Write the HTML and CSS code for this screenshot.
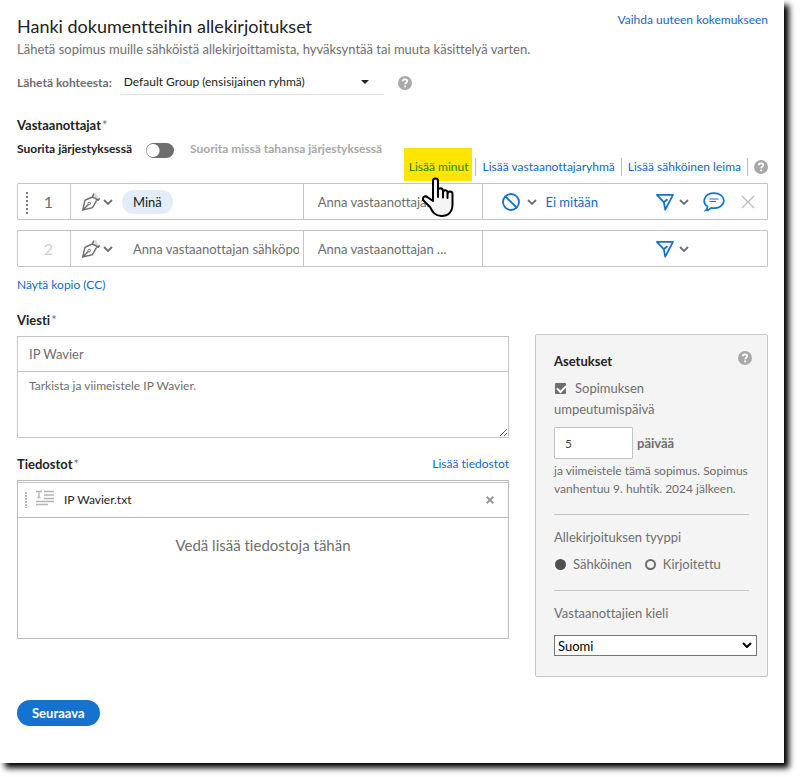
FILE: index.html
```html
<!DOCTYPE html>
<html lang="fi">
<head>
<meta charset="utf-8">
<title>Hanki dokumentteihin allekirjoitukset</title>
<link rel="stylesheet" href="styles.css">
</head>
<body>
<svg class="defs" aria-hidden="true">
  <symbol id="help" viewBox="0 0 14 14"><circle cx="7" cy="7" r="7" fill="#a9a9a9"/><path d="M4.7 5.2C4.7 2.6 9.3 2.7 9.3 5.1C9.3 6.7 7.1 6.7 7.1 8.3" fill="none" stroke="#fff" stroke-width="1.7"/><rect x="6.2" y="9.5" width="1.8" height="1.8" fill="#fff"/></symbol>
  <symbol id="chevron" viewBox="0 0 10 6"><path d="M1 1l4 4 4-4" fill="none" stroke="currentColor" stroke-width="1.8"/></symbol>
  <symbol id="pen" viewBox="0 0 20 20"><path d="M11 4L15 1L18 7L15 8z" fill="#dcdcdc"/><path d="M13 1.5L11.3 5L18 8.3M11.3 5L4 8.3L1.7 18L11.5 15.6L15.3 8.8M2 17.7L7.3 12.5M15.3 8.5L19 6.7" fill="none" stroke="#6e6e6e" stroke-width="1.4"/><circle cx="8.2" cy="11.5" r="1.3" fill="none" stroke="#6e6e6e"/></symbol>
  <symbol id="nib" viewBox="0 0 20 18"><path d="M1.2 1.8H18L10.2 16.6L8.8 9.2L2 2.2M8.8 9.2L12.5 6.2" fill="none" stroke="#1473d0" stroke-width="1.8" stroke-linejoin="round"/></symbol>
</svg>
<main class="page">
  <header class="header">
    <div>
      <h1>Hanki dokumentteihin allekirjoitukset</h1>
      <p class="subtitle">Lähetä sopimus muille sähköistä allekirjoittamista, hyväksyntää tai muuta käsittelyä varten.</p>
    </div>
    <a class="switch-link" href="#">Vaihda uuteen kokemukseen</a>
  </header>

  <div class="sender">
    <label for="group">Lähetä kohteesta:</label>
    <span class="group-box">
      <select id="group"><option>Default Group (ensisijainen ryhmä)</option></select>
      <svg class="caret" viewBox="0 0 8 4"><path d="M0 0h8L4 4z"/></svg>
    </span>
    <button class="icon-btn" type="button" aria-label="Ohje"><svg class="help"><use href="#help"/></svg></button>
  </div>

  <section>
    <h2>Vastaanottajat<span class="req">*</span></h2>
    <div class="toolbar">
      <div class="order">
        <label for="order">Suorita järjestyksessä</label>
        <input id="order" class="toggle" type="checkbox" role="switch">
        <span class="any">Suorita missä tahansa järjestyksessä</span>
      </div>
      <nav class="actions">
        <span class="highlight"><a href="#">Lisää minut</a>
          <svg class="cursor" viewBox="0 0 32 41"><path d="M11 24V4C11 .8 16 .8 16 4V15V13C16 10.500 20.500 10.500 21 13.500V16C21 12.500 25 12.500 25.500 15V17C26 13.500 30.500 14 30.500 17V27C30.500 35 26 39 19.500 39C13 39 10.500 35 8 30L2 24C-1 20.500 3 18 6 20.500L11 24V20M16 11V20M21 14V20.500M25.500 15V21" fill="#f5f5f5" stroke="#000" stroke-width="2" stroke-linejoin="round" stroke-linecap="round"/></svg>
        </span>
        <a class="action" href="#">Lisää vastaanottajaryhmä</a>
        <a class="action" href="#">Lisää sähköinen leima</a>
        <button class="icon-btn action-help" type="button" aria-label="Ohje"><svg class="help"><use href="#help"/></svg></button>
      </nav>
    </div>

    <div class="recipient">
      <div class="cell number"><span class="grip"></span>1</div>
      <div class="cell email">
        <button class="role" type="button" aria-label="Rooli"><svg class="pen"><use href="#pen"/></svg><svg class="chev"><use href="#chevron"/></svg></button>
        <span class="pill">Minä</span>
      </div>
      <div class="cell name"><input type="text" aria-label="Nimi" placeholder="Anna vastaanottajan ..."></div>
      <div class="cell options">
        <button class="auth" type="button"><svg class="none" viewBox="0 0 18 18"><path d="M3 3l12 12" stroke="#1473d0" stroke-width="1.800"/><circle cx="9" cy="9" r="8" fill="none" stroke="#1473d0" stroke-width="1.800"/></svg><svg class="chev"><use href="#chevron"/></svg>Ei mitään</button>
        <button class="delivery" type="button" aria-label="Allekirjoitustapa"><svg class="nib"><use href="#nib"/></svg><svg class="chev"><use href="#chevron"/></svg></button>
        <button class="icon-btn" type="button" aria-label="Viesti"><svg class="chat" viewBox="0 0 22 20"><path d="M4.500 14.500C-1.500 10.500 1 1.200 11 1.200C17 1.200 20.800 4.500 20.800 8.500C20.800 14 14.500 17 8.200 15.800C6.500 17.500 5 18.300 2.800 18.500C4.300 17 4.600 16 4.500 14.500z" fill="none" stroke="#1473d0" stroke-width="1.700"/><path d="M6.500 7H15.500M6.500 9.500H13" stroke="#1473d0"/></svg></button>
        <button class="icon-btn" type="button" aria-label="Poista"><svg class="close" viewBox="0 0 14 14"><path d="M1 1l12 12M13 1L1 13" stroke="#bcbcbc" stroke-width="1.300"/></svg></button>
      </div>
    </div>
    <div class="recipient">
      <div class="cell number pending">2</div>
      <div class="cell email">
        <button class="role" type="button" aria-label="Rooli"><svg class="pen"><use href="#pen"/></svg><svg class="chev"><use href="#chevron"/></svg></button>
        <input class="address" type="text" aria-label="Sähköposti" placeholder="Anna vastaanottajan sähköpostiosoite">
      </div>
      <div class="cell name"><input type="text" aria-label="Nimi" placeholder="Anna vastaanottajan ..."></div>
      <div class="cell options">
        <button class="delivery" type="button" aria-label="Allekirjoitustapa"><svg class="nib"><use href="#nib"/></svg><svg class="chev"><use href="#chevron"/></svg></button>
        <span class="chat"></span><span class="close"></span>
      </div>
    </div>
    <a class="cc" href="#">Näytä kopio (CC)</a>
  </section>

  <div class="columns">
    <div>
      <h2>Viesti<span class="req">*</span></h2>
      <div class="message">
        <input type="text" aria-label="Sopimuksen nimi" value="IP Wavier">
        <textarea aria-label="Viesti">Tarkista ja viimeistele IP Wavier.</textarea>
      </div>
      <div class="files-head">
        <h2>Tiedostot<span class="req">*</span></h2>
        <a href="#">Lisää tiedostot</a>
      </div>
      <div class="files">
        <div class="file">
          <span class="file-grip"></span>
          <svg class="doc" viewBox="0 0 18 16"><path d="M0 1.500H6M3 1.500V7M1.500 7.500H4.500M8 1.500H18M8 5H18M8 8.500H18M0 11.500H18M0 14.500H12" fill="none" stroke="#b4b4b4" stroke-width="1.300"/></svg>
          <span class="file-name">IP Wavier.txt</span>
          <button class="icon-btn" type="button" aria-label="Poista tiedosto"><svg class="remove" viewBox="0 0 8 8"><path d="M.7.7l6.600 6.600M7.300.7L.7 7.300" stroke="#999" stroke-width="2"/></svg></button>
        </div>
        <p class="drop">Vedä lisää tiedostoja tähän</p>
      </div>
    </div>

    <aside class="settings">
      <div class="settings-head">
        <h2>Asetukset</h2>
        <button class="icon-btn" type="button" aria-label="Ohje"><svg class="help"><use href="#help"/></svg></button>
      </div>
      <div class="expiry">
        <input id="expiry" class="check" type="checkbox" checked><label for="expiry">Sopimuksen umpeutumispäivä</label>
      </div>
      <div class="days">
        <input id="days" type="text" value="5"><label for="days">päivää</label>
      </div>
      <p class="note">ja viimeistele tämä sopimus. Sopimus vanhentuu 9. huhtik. 2024 jälkeen.</p>
      <hr>
      <fieldset>
        <legend>Allekirjoituksen tyyppi</legend>
        <div class="radios">
          <label><input type="radio" name="type" checked>Sähköinen</label>
          <label><input type="radio" name="type">Kirjoitettu</label>
        </div>
      </fieldset>
      <hr>
      <label class="lang-label" for="lang">Vastaanottajien kieli</label>
      <span class="lang-box">
        <select id="lang"><option>Suomi</option></select>
        <svg class="lang-chev" viewBox="0 0 10 6"><path d="M1 1l4 4 4-4" fill="none" stroke="#000" stroke-width="2"/></svg>
      </span>
    </aside>
  </div>
  <button class="next" type="button">Seuraava</button>
</main>
</body>
</html>
```
FILE: styles.css
```css
* { box-sizing: border-box; }
body {
  margin: 0;
  background: #fff;
  color: #6e6e6e;
  font: 13px/20px Lato, "Noto Sans", sans-serif;
  font-variant-ligatures: none;
}
h1, h2, p { margin: 0; font-weight: 400; }
a { color: #1268c8; text-decoration: none; }
button, input, select, textarea { font: inherit; color: inherit; margin: 0; }
button { background: none; border: 0; padding: 0; cursor: pointer; }
svg { display: block; flex: none; }
.defs { position: absolute; width: 0; height: 0; }
.page {
  margin: 0 16px 15px 0;
  padding: 14px 16px 37px 17px;
  background: #fff;
  box-shadow: 5px 5px 6px #000;
}
.header { display: flex; justify-content: space-between; }
h1 { color: #222; font-size: 18px; line-height: 24px; }
.subtitle { font-size: 13px; line-height: 22px; }
.switch-link { font-size: 12px; line-height: 12px; white-space: nowrap; margin-left: -60px; }
.sender { display: flex; align-items: center; margin-top: 10px; height: 25px; font-size: 12px; }
.sender label { font-weight: 700; }
.group-box { display: flex; align-items: center; width: 264px; height: 25px; margin: 0 14px 0 8px; border-bottom: 1px solid #e4e4e4; }
.group-box select { flex: 1; appearance: none; border: 0; background: none; padding: 0 4px; color: #222; }
.caret { width: 8px; height: 4px; margin-right: 15px; fill: #222; }
.help { width: 14px; height: 14px; }
h2 { color: #222; font-size: 13px; line-height: 20px; font-weight: 700; }
.req { color: #777; font-weight: 400; margin-left: 1px; }
section > h2 { margin-top: 20px; }
.toolbar { display: flex; justify-content: space-between; height: 48px; padding: 4px 0 2px; }
.order { display: flex; align-items: center; height: 20px; font-size: 12px; font-weight: 700; white-space: nowrap; }
.order label { color: #222; }
.any { color: #a8a8a8; }
.toggle { appearance: none; width: 28px; height: 15px; margin: 2px 16px 0 14px; border-radius: 8px; background: radial-gradient(circle at 7px 50%, #fff 6px, transparent 7px), #6e6e6e; }
.actions { display: flex; align-self: flex-end; height: 33px; font-size: 12px; line-height: 18px; white-space: nowrap; }
.highlight { position: relative; background: #ffe600; padding: 10px 4px 0 5px; margin-right: 3px; }
.highlight a { color: #2b7d00; }
.cursor { position: absolute; left: 18px; top: 29px; width: 32px; height: 41px; z-index: 2; }
.action { height: 18px; margin-top: 10px; padding: 0 6px; border-left: 1px solid #bbb; }
.action-help { height: 18px; margin-top: 10px; padding-left: 6px; border-left: 1px solid #bbb; }
.recipient { display: grid; grid-template-columns: 52px minmax(0, 233fr) minmax(0, 180fr) minmax(0, 285fr); height: 37px; border: 1px solid #c4c4c4; border-radius: 1px; }
.recipient + .recipient { margin-top: 10px; }
.cell { display: flex; align-items: center; min-width: 0; }
.cell + .cell { border-left: 1px solid #c4c4c4; }
.cell input { min-width: 0; width: 100%; border: 0; padding: 0; background: none; outline: 0; }
.cell input::placeholder { color: #6e6e6e; opacity: 1; }
.number { position: relative; justify-content: center; padding-left: 9px; font-size: 16px; }
.pending { color: #d0d0d0; }
.grip { position: absolute; left: 8px; top: 8px; width: 2px; height: 23px; background: repeating-linear-gradient(#777 0 2px, transparent 2px 4px); }
.email { padding: 0 4px 0 10px; }
.role, .delivery, .auth { display: flex; align-items: center; }
.pen { width: 20px; height: 20px; margin-right: 2px; }
.chev { width: 10px; height: 6px; color: #6e6e6e; }
.pill { margin-left: 9px; padding: 2px 11px; border-radius: 12px; background: #e4ecf8; color: #222; }
.cell .address { margin-left: 20px; }
.name { padding: 0 14px; }
.options { padding: 0 12px 0 19px; }
.auth { color: #1268c8; }
.auth .chev { margin: 0 8px 0 7px; }
.none { width: 18px; height: 18px; }
.delivery { margin-left: auto; margin-right: 14px; }
.nib { width: 20px; height: 18px; margin-right: 4px; }
.chat { width: 22px; height: 20px; margin-right: 16px; }
.close { width: 14px; height: 14px; }
.cc { display: block; width: max-content; margin-top: 9px; font-size: 12px; line-height: 18px; }
.columns { display: grid; grid-template-columns: minmax(0, 1fr) 233px; gap: 26px; align-items: start; margin-top: 16px; }
.message { display: flex; flex-direction: column; margin-top: 6px; }
.message input { height: 36px; border: 1px solid #c4c4c4; padding: 0 11px; }
.message textarea { display: block; height: 67px; margin-top: -1px; border: 1px solid #c4c4c4; padding: 4px 11px; font-size: 12px; line-height: 20px; resize: vertical; }
.files-head { display: flex; justify-content: space-between; margin-top: 16px; }
.files-head a { font-size: 12px; }
.files { margin-top: 6px; min-height: 159px; border: 1px solid #bbb; padding-top: 1px; }
.file { display: flex; align-items: center; height: 36px; padding: 0 14px 0 7px; border-top: 1px solid #c4c4c4; border-bottom: 1px solid #bbb; color: #222; font-size: 12px; }
.file-grip { width: 2px; height: 16px; background: repeating-linear-gradient(#bbb 0 2px, transparent 2px 3px); }
.doc { width: 18px; height: 16px; margin: 0 10px 4px 9px; }
.file-name { flex: 1; }
.remove { width: 8px; height: 8px; }
.drop { margin-top: 17px; text-align: center; font-size: 15px; }
.settings { margin-top: 24px; padding: 16px 10px 20px 18px; border: 1px solid #c8c8c8; border-radius: 2px; background: #f4f4f4; }
.settings-head { display: flex; align-items: flex-start; justify-content: space-between; height: 20px; padding-right: 5px; }
.expiry { margin-top: 7px; padding-right: 60px; line-height: 21px; }
.check { position: relative; appearance: none; width: 11px; height: 11px; margin: 0 9px 0 1px; border-radius: 1px; background: #6e6e6e; vertical-align: -1px; }
.check:checked::after { content: ""; position: absolute; left: 2px; top: 2px; width: 7px; height: 4px; border: solid #fff; border-width: 0 0 2px 2px; transform: rotate(-45deg); }
.days { display: flex; align-items: center; gap: 4px; margin-top: 7px; font-weight: 700; }
.days input { width: 79px; height: 32px; border: 1px solid #c4c4c4; border-radius: 1px; background: #fff; padding: 0 10px; font-size: 12px; font-weight: 400; color: #444; }
.note { margin-top: 3px; font-size: 12px; line-height: 18px; }
hr { height: 1px; margin: 16px 8px 12px 0; border: 0; background: #c4c4c4; }
fieldset { border: 0; margin: 0; padding: 0; min-width: 0; }
legend { padding: 0; }
.radios { display: flex; gap: 12px; margin-top: 7px; }
.radios label { display: flex; align-items: center; }
.radios input { appearance: none; width: 11px; height: 11px; margin: 0 7px 0 1px; border: 2px solid #6e6e6e; border-radius: 50%; }
.radios input:checked { background: #505050; border-color: #505050; }
.lang-label { display: block; }
.lang-box { position: relative; display: block; margin-top: 12px; }
.lang-box select { display: block; appearance: none; width: 100%; height: 21px; border: 1px solid #767676; background: #fff; padding: 0 3px; color: #000; line-height: 18px; }
.lang-chev { position: absolute; right: 5px; top: 7px; width: 10px; height: 6px; pointer-events: none; }
.next { display: block; height: 26px; margin-top: 23px; padding: 0 15px; border-radius: 13px; background: #1473ce; color: #fff; font-weight: 700; }
```
